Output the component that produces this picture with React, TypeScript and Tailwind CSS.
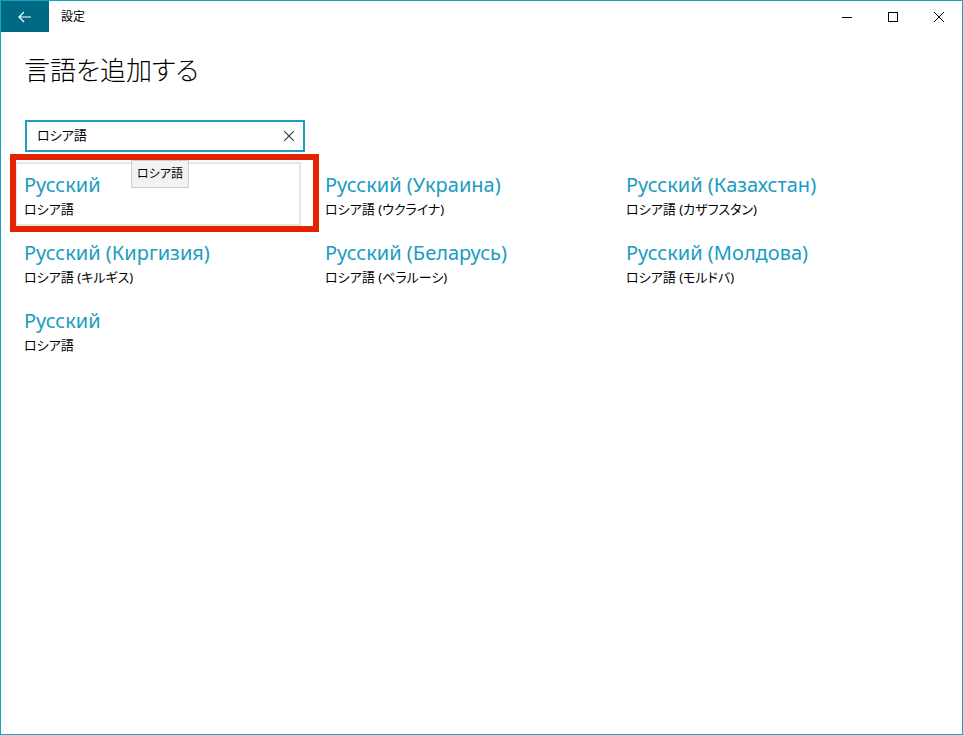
import React from 'react';

const languages = [
  { name: 'Русский', native: 'ロシア語' },
  { name: 'Русский (Украина)', native: 'ロシア語 (ウクライナ)' },
  { name: 'Русский (Казахстан)', native: 'ロシア語 (カザフスタン)' },
  { name: 'Русский (Киргизия)', native: 'ロシア語 (キルギス)' },
  { name: 'Русский (Беларусь)', native: 'ロシア語 (ベラルーシ)' },
  { name: 'Русский (Молдова)', native: 'ロシア語 (モルドバ)' },
  { name: 'Русский', native: 'ロシア語' },
];

const TitleBar = () => (
  <div className="flex h-[31px] items-stretch">
    <div className="flex w-12 items-center justify-center bg-[#006a82]">
      <svg width="16" height="16" viewBox="0 0 16 16" fill="none" stroke="white" strokeWidth="1.2">
        <path d="M2 8h12M7 3L2 8l5 5" />
      </svg>
    </div>
    <div className="ml-3 flex items-center text-[12px] text-black">設定</div>
    <div className="ml-auto flex">
      <div className="flex w-[46px] items-center justify-center">
        <svg width="10" height="10" viewBox="0 0 10 10" stroke="black" strokeWidth="1">
          <path d="M0 5.5h10" />
        </svg>
      </div>
      <div className="flex w-[46px] items-center justify-center">
        <svg width="10" height="10" viewBox="0 0 10 10" fill="none" stroke="black" strokeWidth="1">
          <rect x="0.5" y="0.5" width="9" height="9" />
        </svg>
      </div>
      <div className="flex w-[46px] items-center justify-center">
        <svg width="10" height="10" viewBox="0 0 10 10" stroke="black" strokeWidth="1">
          <path d="M0 0l10 10M10 0L0 10" />
        </svg>
      </div>
    </div>
  </div>
);

export default function App() {
  return (
    <div className="flex h-[735px] w-[963px] flex-col border border-[#1aa1c6] bg-white font-['Noto_Sans','Noto_Sans_CJK_JP',sans-serif] [font-feature-settings:'palt']">
      <TitleBar />
      <div className="flex flex-col pl-[23px] pr-6">
        <h1 className="mt-[18px] text-[26px] font-light leading-[40px] text-black">言語を追加する</h1>

        <div className="mt-[30px] ml-px flex h-8 w-[280px] items-center border-2 border-[#1a9ec2] pl-[10px] pr-[9px]">
          <span className="text-[13px] text-black">ロシア語</span>
          <svg className="ml-auto" width="10" height="10" viewBox="0 0 10 10" stroke="#333" strokeWidth="1.1">
            <path d="M0 0l10 10M10 0L0 10" />
          </svg>
        </div>

        <div className="mt-[19px] grid grid-cols-[301px_301px_301px] gap-y-5">
          {languages.map((lang, i) => (
            <div key={i} className="relative flex flex-col">
              {i === 0 && (
                <>
                  <div className="absolute left-[-9px] top-[-9px] h-16 w-[286px] border-2 border-[#e6e6e6]" />
                  <div className="absolute left-[-14px] top-[-17px] h-[78px] w-[309px] border-[6px] border-[#e22500]" />
                </>
              )}
              <span className="relative text-[20px] leading-7 text-[#1a9cc0]">{lang.name}</span>
              <span className="relative text-[13px] leading-5 text-black">{lang.native}</span>
              {i === 0 && (
                <div className="absolute left-[107px] top-[-11px] flex h-7 w-[58px] items-center justify-center border border-[#cccccc] bg-[#f2f2f2] text-[12px] text-black">
                  ロシア語
                </div>
              )}
            </div>
          ))}
        </div>
      </div>
    </div>
  );
}
